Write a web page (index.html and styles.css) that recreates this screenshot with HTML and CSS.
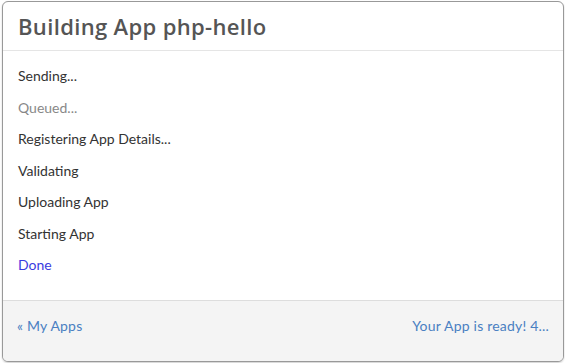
FILE: index.html
```html
<!DOCTYPE html>
<html>
<head>
  <meta charset="UTF-8">
  <title>Building App php-hello</title>
  <link rel="stylesheet" href="styles.css">
</head>
<body>
  <div class="modal">
    <div class="modal-header">
      <h3>Building App php-hello</h3>
    </div>

    <div class="modal-body">
      <p class="step">Sending...</p>
      <p class="step muted">Queued...</p>
      <p class="step">Registering App Details...</p>
      <p class="step">Validating</p>
      <p class="step">Uploading App</p>
      <p class="step">Starting App</p>
      <p class="step done">Done</p>
    </div>

    <div class="modal-footer">
      <a href="#" class="back">&laquo; My Apps</a>
      <a href="#" class="ready">Your App is ready! 4...</a>
    </div>
  </div>
</body>
</html>
```

FILE: styles.css
```css
body {
  margin: 0;
  padding: 1px 1px 1px 2px;
  background: #fff;
  font-family: "Lato", "Open Sans", sans-serif;
}
.modal {
  height: 361px;
  box-sizing: border-box;
  border: 1px solid #999;
  border-radius: 6px;
  background: #fff;
  display: flex;
  flex-direction: column;
  overflow: hidden;
  box-shadow: 0 1px 2px rgba(0,0,0,0.2);
}
.modal-header {
  padding: 12px 15px;
  border-bottom: 1px solid #e5e5e5;
}
.modal-header h3 {
  margin: 0;
  font-family: "Open Sans", sans-serif;
  font-size: 22px;
  line-height: 24px;
  font-weight: 600;
  letter-spacing: 0.35px;
  color: #555;
}
.modal-body {
  flex: 1;
  padding: 15px 15px 0;
}
.step {
  margin: 0 0 11.5px;
  font-size: 14px;
  line-height: 20px;
  color: #333;
}
.step.muted {
  color: #888;
}
.step.done {
  color: #3b3be0;
}
.modal-footer {
  height: 61px;
  box-sizing: border-box;
  padding: 15px 14px;
  border-top: 1px solid #ddd;
  background: #f4f4f4;
  display: flex;
  justify-content: space-between;
  font-size: 14px;
  line-height: 20px;
  letter-spacing: 0.2px;
}
.modal-footer a {
  color: #4a80c2;
  text-decoration: none;
}
```
